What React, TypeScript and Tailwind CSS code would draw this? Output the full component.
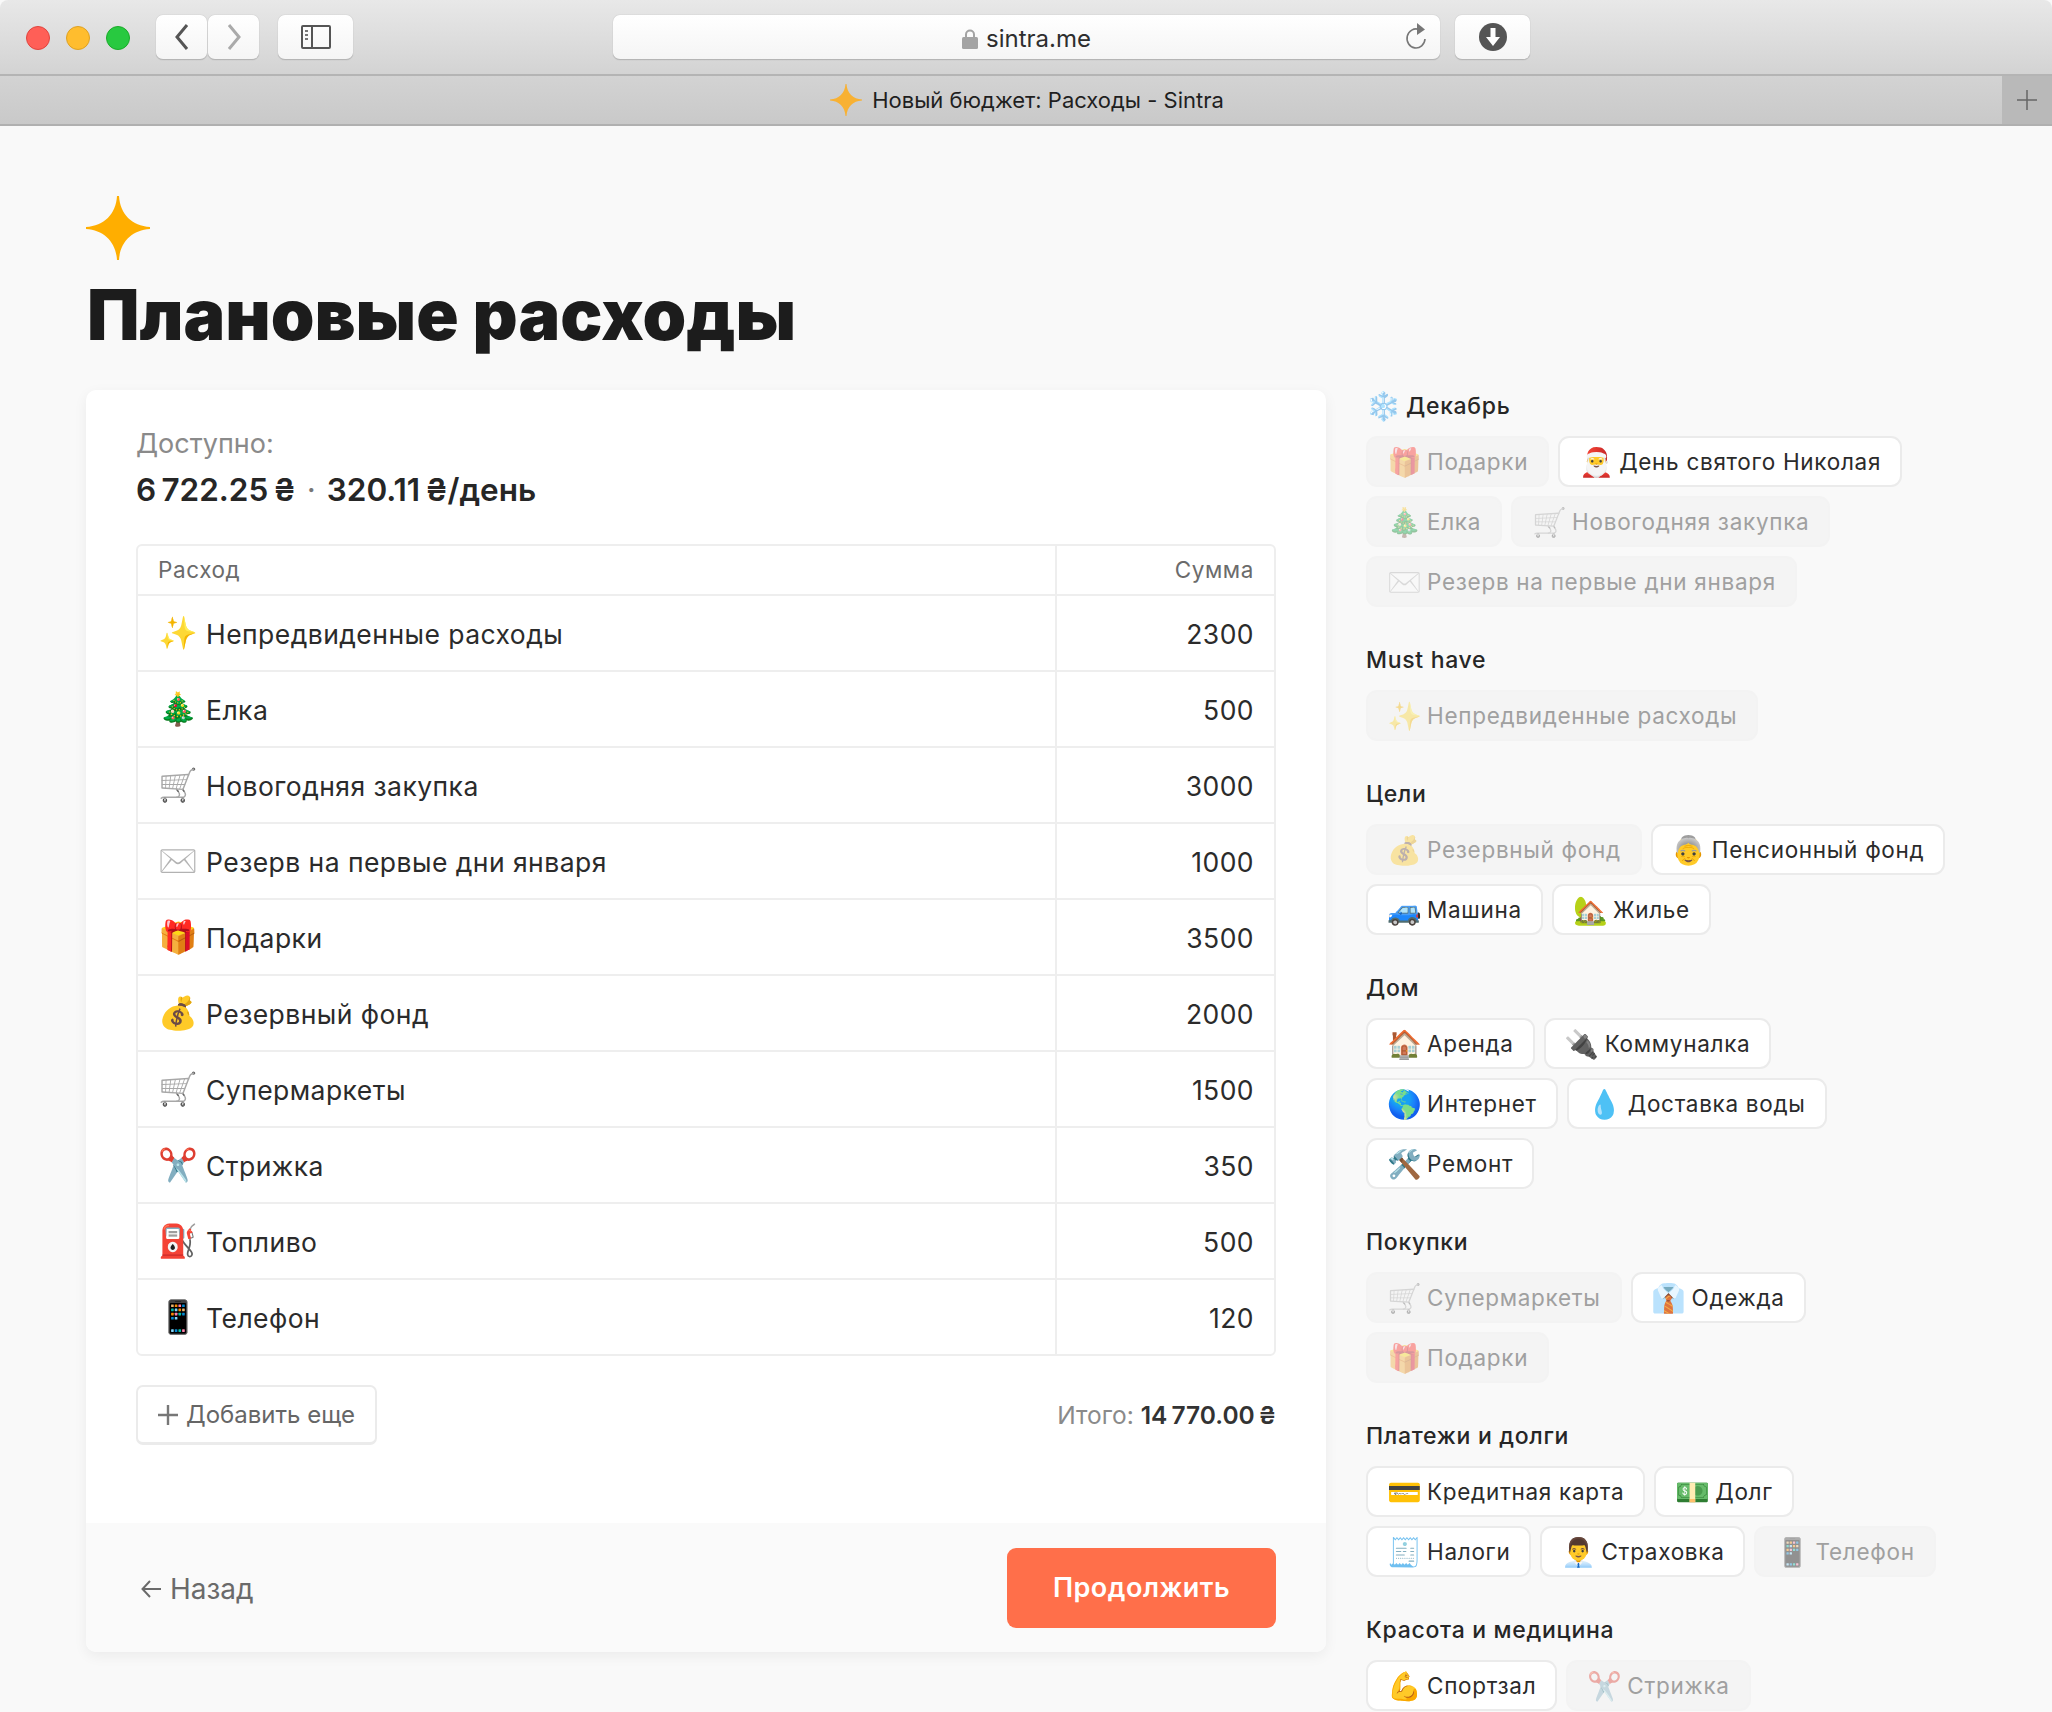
const rows: [string, string, string][] = [
  ["✨", "Непредвиденные расходы", "2300"],
  ["🎄", "Елка", "500"],
  ["🛒", "Новогодняя закупка", "3000"],
  ["✉️", "Резерв на первые дни января", "1000"],
  ["🎁", "Подарки", "3500"],
  ["💰", "Резервный фонд", "2000"],
  ["🛒", "Супермаркеты", "1500"],
  ["✂️", "Стрижка", "350"],
  ["⛽", "Топливо", "500"],
  ["📱", "Телефон", "120"],
];

type Chip = [string, string, boolean?];
const groups: { title: string; icon?: string; chips: Chip[]; cls: string }[] = [
  { title: "Декабрь", icon: "❄️", cls: "mb-[38px]", chips: [["🎁", "Подарки", true], ["🎅", "День святого Николая"], ["🎄", "Елка", true], ["🛒", "Новогодняя закупка", true], ["✉️", "Резерв на первые дни января", true]] },
  { title: "Must have", cls: "mb-[38px]", chips: [["✨", "Непредвиденные расходы", true]] },
  { title: "Цели", cls: "mb-[38px]", chips: [["💰", "Резервный фонд", true], ["👵", "Пенсионный фонд"], ["🚙", "Машина"], ["🏡", "Жилье"]] },
  { title: "Дом", cls: "mb-[38px]", chips: [["🏠", "Аренда"], ["🔌", "Коммуналка"], ["🌎", "Интернет"], ["💧", "Доставка воды"], ["🛠️", "Ремонт"]] },
  { title: "Покупки", cls: "mb-[38px]", chips: [["🛒", "Супермаркеты", true], ["👔", "Одежда"], ["🎁", "Подарки", true]] },
  { title: "Платежи и долги", cls: "mb-[38px]", chips: [["💳", "Кредитная карта"], ["💵", "Долг"], ["🧾", "Налоги"], ["👨‍💼", "Страховка"], ["📱", "Телефон", true]] },
  { title: "Красота и медицина", cls: "", chips: [["💪", "Спортзал"], ["✂️", "Стрижка", true]] },
];

const font = { fontFamily: "Inter, 'Noto Sans', 'Noto Color Emoji', sans-serif" };

function Star({ className, fill }: { className: string; fill: string }) {
  return (
    <svg viewBox="0 0 64 64" className={className}>
      <path d="M31 0 H33 C34 18 46 30 64 31 V33 C46 34 34 46 33 64 H31 C30 46 18 34 0 33 V31 C18 30 30 18 31 0 Z" fill={fill} />
    </svg>
  );
}

function ChromeBtn({ className, children }: { className: string; children: React.ReactNode }) {
  return (
    <div className={"flex h-[45px] items-center justify-center rounded-[7px] border-b border-b-[#b5b5b5] bg-gradient-to-b from-white to-[#f5f5f5] shadow-[0_0_1px_rgba(0,0,0,0.3)] " + className}>
      {children}
    </div>
  );
}

function isGrey(icon: string) {
  return icon === "🛒" || icon === "✉️";
}

function BrowserChrome() {
  return (
    <div className="h-[126px] shrink-0">
      <div className="flex h-[76px] items-start overflow-hidden rounded-t-[8px] border-b-2 border-b-[#b4b4b4] bg-gradient-to-b from-[#e8e8e8] to-[#d3d3d3] pt-[15px]">
        <div className="ml-[26px] mt-[11px] flex gap-[16px]">
          <div className="h-[24px] w-[24px] rounded-full border border-[#e0443e] bg-[#ff5f57]" />
          <div className="h-[24px] w-[24px] rounded-full border border-[#dea123] bg-[#ffbd2e]" />
          <div className="h-[24px] w-[24px] rounded-full border border-[#1aab29] bg-[#28c940]" />
        </div>
        <div className="ml-[26px] flex gap-px">
          <ChromeBtn className="w-[51px]">
            <svg width="18" height="26" viewBox="0 0 18 26" fill="none"><path d="M14 1 L4 13 L14 25" stroke="#555" strokeWidth="3" /></svg>
          </ChromeBtn>
          <ChromeBtn className="w-[51px]">
            <svg width="18" height="26" viewBox="0 0 18 26" fill="none"><path d="M4 1 L14 13 L4 25" stroke="#aaa" strokeWidth="3" /></svg>
          </ChromeBtn>
        </div>
        <ChromeBtn className="ml-[19px] w-[75px]">
          <svg width="30" height="24" viewBox="0 0 30 24" fill="none">
            <rect x="1" y="1" width="28" height="22" rx="1" stroke="#555" strokeWidth="2" />
            <path d="M11 1 V23" stroke="#555" strokeWidth="2" />
            <path d="M4 6 H7 M4 10 H7 M4 14 H7" stroke="#777" strokeWidth="2" />
          </svg>
        </ChromeBtn>
        <ChromeBtn className="relative ml-[260px] w-[827px]">
          <div className="mt-[3px] flex items-center gap-[8px]" style={font}>
            <svg width="16" height="20" viewBox="0 0 16 20" fill="none">
              <path d="M4 9 V5.5 a4 4 0 0 1 8 0 V9" stroke="#a3a3a3" strokeWidth="2" />
              <rect x="0" y="8" width="16" height="12" rx="1.5" fill="#a3a3a3" />
            </svg>
            <span className="text-[24px] text-[#2e2e2e]">sintra.me</span>
          </div>
          <svg className="absolute right-[12px] top-[8px]" width="24" height="28" viewBox="0 0 24 28" fill="none">
            <path d="M15 6.5 A9 9.5 0 1 0 21 16" stroke="#777" strokeWidth="1.6" />
            <path d="M13 0 L21 6.5 L13 12 Z" fill="#777" />
          </svg>
        </ChromeBtn>
        <ChromeBtn className="ml-[15px] w-[75px]">
          <svg width="28" height="28" viewBox="0 0 28 28">
            <circle cx="14" cy="14" r="14" fill="#555" />
            <path d="M11.5 5 H16.5 V14 H21 L14 23 L7 14 H11.5 Z" fill="#fff" />
          </svg>
        </ChromeBtn>
      </div>
      <div className="flex h-[50px] items-stretch border-b-2 border-b-[#b0b0b0] bg-gradient-to-b from-[#d3d3d3] to-[#c9c9c9]">
        <div className="flex flex-1 items-center justify-center gap-[10px] pl-[52px]" style={font}>
          <Star className="h-[32px] w-[32px]" fill="#f8b133" />
          <span className="text-[22px] text-[#1f1f1f]">Новый бюджет: Расходы - Sintra</span>
        </div>
        <div className="flex w-[50px] items-center justify-center bg-[#b9b9b9]">
          <svg width="22" height="22" viewBox="0 0 22 22"><path d="M11 1 V21 M1 11 H21" stroke="#666" strokeWidth="1.5" /></svg>
        </div>
      </div>
    </div>
  );
}

function Sidebar() {
  return (
    <aside className="w-[588px] shrink-0 pt-[1px]">
      {groups.map((g) => (
        <section key={g.title} className={g.cls}>
          <h2 className="mb-[15px] flex h-[30px] items-center gap-[8px] text-[23px] font-medium tracking-[0.7px] text-[#262626]">
            {g.icon && <span className="w-[32px] text-center text-[28px] leading-none">{g.icon}</span>}
            {g.title}
          </h2>
          <div className="flex flex-wrap gap-x-[9px] gap-y-[9px]">
            {g.chips.map(([icon, label, off], i) => (
              <div
                key={i}
                className={
                  "flex h-[51px] items-center gap-[9px] rounded-[11px] border-2 px-[19px] text-[22.5px] tracking-[0.7px] " +
                  (off ? "border-[#f3f3f3] bg-[#f4f4f4] text-[#a0a0a0]" : "border-[#ebebeb] bg-white text-[#2b2b2b]")
                }
              >
                <span className={"w-[31px] text-center text-[28px] leading-none " + (off ? "opacity-40 " : "") + (isGrey(icon) ? "grayscale" : "")}>{icon}</span>
                <span>{label}</span>
              </div>
            ))}
          </div>
        </section>
      ))}
    </aside>
  );
}

function Card() {
  return (
    <div className="w-[1240px] shrink-0 overflow-hidden rounded-[10px] bg-white shadow-[0_4px_14px_rgba(0,0,0,0.06)]">
      <div className="h-[1133px] px-[50px] pt-[36px]">
        <div className="text-[27px] leading-[36px] text-[#8a8a8a]">Доступно:</div>
        <div className="mt-[7px] flex items-center text-[31.5px] font-semibold leading-[42px] text-[#262626]">
          <span>6{"\u2009"}722.25{"\u2009"}₴</span>
          <span className="mx-[11px] font-normal text-[#777]">·</span>
          <span>320.11{"\u2009"}₴/день</span>
        </div>
        <div className="mt-[33px] overflow-hidden rounded-[6px] border-2 border-[#eeeeee]">
          <div className="flex h-[48px] items-center text-[22.5px] tracking-[0.6px] text-[#6b6b6b]">
            <div className="flex-1 pl-[20px]">Расход</div>
            <div className="flex h-full w-[219px] items-center justify-end border-l-2 border-[#eeeeee] pr-[20px]">Сумма</div>
          </div>
          {rows.map(([icon, label, sum]) => (
            <div key={label} className="flex h-[76px] items-center border-t-2 border-[#eeeeee] text-[26.5px] tracking-[0.45px] text-[#2b2b2b]">
              <div className="flex flex-1 items-center gap-[12px] pl-[20px]">
                <span className={"w-[36px] text-center text-[32px] leading-none " + (isGrey(icon) ? "grayscale" : "")}>{icon}</span>
                <span className="pt-[4px]">{label}</span>
              </div>
              <div className="flex h-full w-[219px] items-center justify-end border-l-2 border-[#eeeeee] pr-[20px]">
                <span className="pt-[4px]">{sum}</span>
              </div>
            </div>
          ))}
        </div>
        <div className="mt-[29px] flex items-center justify-between">
          <div className="flex h-[60px] w-[241px] items-center justify-center gap-[8px] rounded-[7px] border-2 border-b-[3px] border-[#ebebeb] bg-white text-[24px] text-[#666]">
            <svg width="20" height="20" viewBox="0 0 20 20"><path d="M10 0 V20 M0 10 H20" stroke="#777" strokeWidth="2.4" /></svg>
            Добавить еще
          </div>
          <div className="text-[24.5px] text-[#8a8a8a]">
            Итого: <span className="font-semibold text-[#333]">14{"\u2009"}770.00{"\u2009"}₴</span>
          </div>
        </div>
      </div>
      <div className="flex h-[129px] items-center justify-between bg-[#fafafa] pl-[54px] pr-[50px]">
        <div className="flex items-center gap-[8px] pt-[2px] text-[28px] text-[#6a6a6a]">
          <svg width="22" height="20" viewBox="0 0 22 20" fill="none"><path d="M21 10 H3 M10 2 L2.5 10 L10 18" stroke="#6a6a6a" strokeWidth="2" /></svg>
          Назад
        </div>
        <div className="flex h-[80px] w-[269px] items-center justify-center rounded-[9px] bg-[#ff6f4a] pt-[2px] text-[27px] font-semibold tracking-[0.5px] text-white">
          Продолжить
        </div>
      </div>
    </div>
  );
}

export default function App() {
  return (
    <div className="flex h-[1712px] w-[2052px] flex-col overflow-hidden bg-[#f9f9f9]" style={font}>
      <BrowserChrome />
      <main className="px-[86px] pt-[70px]">
        <Star className="h-[64px] w-[64px]" fill="#ffae00" />
        <h1 className="mt-[13px] pl-[1px] text-[70px] font-black leading-[84px] text-[#1c1c1c]">Плановые расходы</h1>
        <div className="mt-[33px] flex items-start gap-[40px]">
          <Card />
          <Sidebar />
        </div>
      </main>
    </div>
  );
}
